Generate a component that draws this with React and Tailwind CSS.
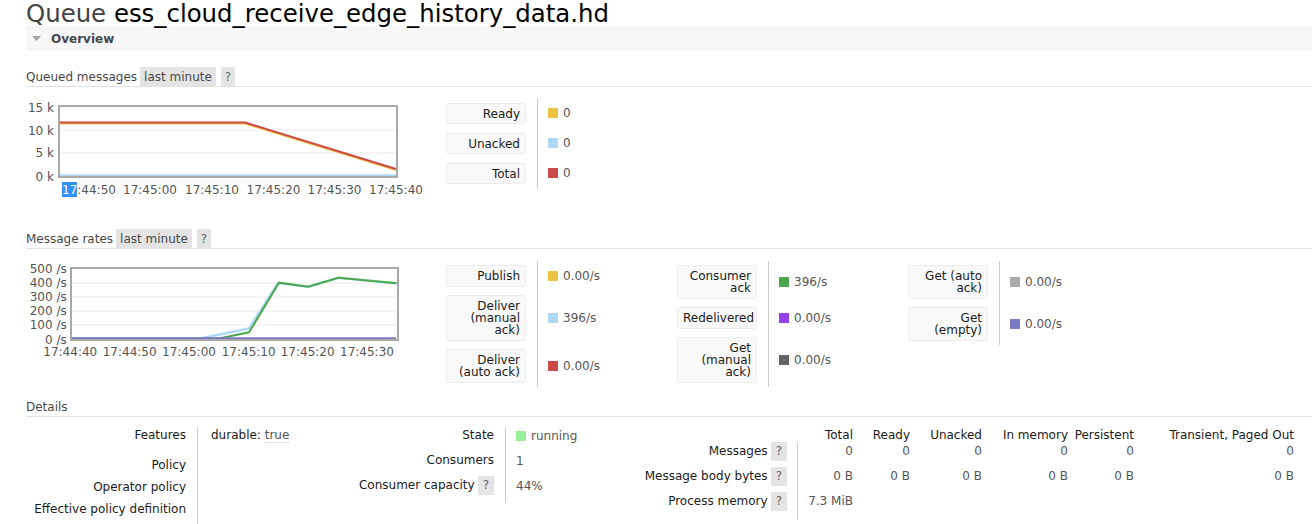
import * as React from 'react';

const QUEUED = [
  { label: ['Ready'], color: 'bg-[#edc240]', value: '0' },
  { label: ['Unacked'], color: 'bg-[#afd8f8]', value: '0' },
  { label: ['Total'], color: 'bg-[#cb4b4b]', value: '0' },
];

const RATES = [
  [
    { label: ['Publish'], color: 'bg-[#edc240]', value: '0.00/s' },
    { label: ['Deliver', '(manual', 'ack)'], color: 'bg-[#afd8f8]', value: '396/s' },
    { label: ['Deliver', '(auto ack)'], color: 'bg-[#cb4b4b]', value: '0.00/s' },
  ],
  [
    { label: ['Consumer', 'ack'], color: 'bg-[#4da74d]', value: '396/s' },
    { label: ['Redelivered'], color: 'bg-[#9440ed]', value: '0.00/s' },
    { label: ['Get', '(manual', 'ack)'], color: 'bg-[#646464]', value: '0.00/s' },
  ],
  [
    { label: ['Get (auto', 'ack)'], color: 'bg-[#aaaaaa]', value: '0.00/s' },
    { label: ['Get', '(empty)'], color: 'bg-[#7c79c3]', value: '0.00/s' },
  ],
];

const MSG_COLS = ['Total', 'Ready', 'Unacked', 'In memory', 'Persistent', 'Transient, Paged Out'];

function Help() {
  return (
    <span className="inline-flex h-[19px] items-center bg-[#e4e4e4] px-[5px] text-[#666]">?</span>
  );
}

function SectionHead({ title, options }) {
  return (
    <div className="flex h-[20px] items-center border-b border-[#e2e2e2] text-[#484848]">
      <span>{title}</span>
      {options && (
        <>
          <span className="ml-[3px] flex h-[19px] items-center bg-[#e4e4e4] px-[4px]">last minute</span>
          <span className="ml-[5px] flex h-[19px] items-center bg-[#e4e4e4] px-[4px] text-[#666]">?</span>
        </>
      )}
    </div>
  );
}

// compact: the queued-messages legend, where every row is a single 21px box
function Legend({ rows, compact }) {
  return (
    <div className="grid w-[231px] shrink-0 grid-cols-[91px_auto] content-start">
      {rows.map((r, i) => (
        <React.Fragment key={i}>
          <div className={compact ? 'pb-[4px] pr-[11px] pt-[5px]' : 'py-[4px] pr-[11px]'}>
            <div
              className={`rounded-[3px] border border-[#ececec] bg-[#f9f9f9] px-[5px] text-right text-[#1a1a1a] ${
                compact ? 'flex h-[21px] items-center justify-end' : 'py-[4px]'
              }`}
            >
              {r.label.map((l, j) => (
                <div key={j}>{l}</div>
              ))}
            </div>
          </div>
          <div className="flex items-center border-l border-[#ccc] pl-[10px] text-[#555]">
            <span className={`mr-[5px] h-[10px] w-[10px] ${r.color}`} />
            {r.value}
          </div>
        </React.Fragment>
      ))}
    </div>
  );
}

function QueuedChart() {
  const xs = [62, 123, 185, 246.5, 307.5, 369];
  const labels = ['17:44:50', '17:45:00', '17:45:10', '17:45:20', '17:45:30', '17:45:40'];
  return (
    <svg width="404" height="102" viewBox="26 98 404 102" className="shrink-0" fontFamily="DejaVu Sans, sans-serif" fontSize="12">
      <line x1="60" x2="396" y1="130" y2="130" stroke="#ebebeb" />
      <line x1="60" x2="396" y1="153" y2="153" stroke="#ebebeb" />
      <line x1="60" x2="396" y1="175.5" y2="175.5" stroke="#afd8f8" strokeWidth="2.5" />
      <polyline points="60,123.5 245,123.5 396,170" fill="none" stroke="#edc240" strokeWidth="2" />
      <polyline points="60,122.5 245,122.5 396,169" fill="none" stroke="#cb4b4b" strokeWidth="2" />
      <rect x="59" y="106" width="338" height="71" fill="none" stroke="#a9a9a9" strokeWidth="2" />
      {[['15 k', 108], ['10 k', 130.5], ['5 k', 153], ['0 k', 176.5]].map(([t, y]) => (
        <text key={t} x="54" y={y + 4.4} textAnchor="end" fill="#545454">{t}</text>
      ))}
      <rect x="62" y="182" width="15" height="15" fill="#3390ff" />
      {labels.map((t, i) =>
        i === 0 ? (
          <text key={t} x={xs[i]} y="194" fill="#545454">
            <tspan fill="#fff">17</tspan>:44:50
          </text>
        ) : (
          <text key={t} x={xs[i]} y="194" fill="#545454">{t}</text>
        )
      )}
    </svg>
  );
}

function RatesChart() {
  const xs = [43.3, 102.7, 162, 221.7, 280.7, 340];
  const labels = ['17:44:40', '17:44:50', '17:45:00', '17:45:10', '17:45:20', '17:45:30'];
  return (
    <svg width="404" height="104" viewBox="26 261 404 104" className="shrink-0" fontFamily="DejaVu Sans, sans-serif" fontSize="12">
      {[283, 297, 311, 325].map((y) => (
        <line key={y} x1="72" x2="396" y1={y} y2={y} stroke="#ebebeb" />
      ))}
      <polyline points="200,338.5 249,328.5 278,283 308.3,286.7 338.3,277.7 396.5,283.3" fill="none" stroke="#afd8f8" strokeWidth="2.5" />
      <polyline points="72,338.5 220,338.3 249,332.3 279,282.7 308.3,286.7 338.3,277.7 396.5,283.3" fill="none" stroke="#4da74d" strokeWidth="2" />
      <line x1="72" x2="396" y1="338.5" y2="338.5" stroke="#7c79c3" strokeWidth="2.5" />
      <rect x="71" y="268" width="327" height="72" fill="none" stroke="#a9a9a9" strokeWidth="2" />
      {[['500 /s', 268.7], ['400 /s', 283], ['300 /s', 297], ['200 /s', 311], ['100 /s', 325], ['0 /s', 339.3]].map(([t, y]) => (
        <text key={t} x="66.7" y={y + 4.4} textAnchor="end" fill="#545454">{t}</text>
      ))}
      {labels.map((t, i) => (
        <text key={t} x={xs[i]} y="355.7" fill="#545454">{t}</text>
      ))}
    </svg>
  );
}

export default function App() {
  return (
    <div className="h-[524px] w-[1312px] overflow-hidden bg-white pl-[26px] font-['DejaVu_Sans',Verdana,sans-serif] text-[12px] leading-[12px] text-[#484848]">
      <h1 className="h-[26px] whitespace-nowrap text-[24.4px] font-normal leading-[28.5px] text-[#444]">
        Queue <span className="text-black">ess_cloud_receive_edge_history_data.hd</span>
      </h1>

      <div className="flex h-[25px] items-center bg-[#f7f7f7] pl-[6px]">
        <svg width="9" height="5" viewBox="0 0 9 5" className="mr-[10px]">
          <polygon points="0,0 9,0 4.5,5" fill="#a6a6a6" />
        </svg>
        <span className="font-bold text-[#484848]">Overview</span>
      </div>

      <div className="mt-[16px]">
        <SectionHead title="Queued messages" options />
      </div>
      <div className="flex h-[142px] items-start pt-[11px]">
        <QueuedChart />
        <div className="ml-[16px]">
          <Legend rows={QUEUED} compact />
        </div>
      </div>

      <SectionHead title="Message rates" options />
      <div className="flex h-[148px] items-start pt-[12px]">
        <RatesChart />
        <div className="ml-[16px] flex">
          {RATES.map((col, i) => (
            <Legend key={i} rows={col} />
          ))}
        </div>
      </div>

      <SectionHead title="Details" />
      <div className="flex items-start pt-[11px]">
        {/* features / policy */}
        <div className="grid w-[314px] shrink-0 grid-cols-[171px_143px] text-[#1a1a1a]">
          <div className="h-[26px] pr-[11px] pt-[1px] text-right">Features</div>
          <div className="border-l border-[#ccc] pl-[13px] pt-[1px]">
            durable:{' '}
            <abbr className="border-b border-dotted border-[#ccc] text-[#555] no-underline">true</abbr>
          </div>
          <div className="h-[22px] pr-[11px] pt-[5px] text-right">Policy</div>
          <div className="border-l border-[#ccc]" />
          <div className="h-[22px] pr-[11px] pt-[5px] text-right">Operator policy</div>
          <div className="border-l border-[#ccc]" />
          <div className="h-[26px] pr-[11px] pt-[5px] text-right">Effective policy definition</div>
          <div className="border-l border-[#ccc]" />
        </div>

        {/* state / consumers */}
        <div className="grid w-[300px] shrink-0 grid-cols-[165px_auto] text-[#1a1a1a]">
          <div className="h-[25px] pr-[11px] pt-[1px] text-right">State</div>
          <div className="flex items-start border-l border-[#ccc] pl-[10px] pt-[2px] text-[#555]">
            <span className="mr-[5px] mt-[1px] h-[10px] w-[10px] bg-[#99ee99]" />
            running
          </div>
          <div className="h-[25px] pr-[11px] pt-[1px] text-right">Consumers</div>
          <div className="border-l border-[#ccc] pl-[10px] pt-[2px] text-[#555]">1</div>
          <div className="h-[25px] pr-[11px] pt-[1px]">
            <div className="flex h-[12px] items-center justify-end gap-[3px]">
              Consumer capacity <Help />
            </div>
          </div>
          <div className="border-l border-[#ccc] pl-[10px] pt-[2px] text-[#555]">44%</div>
        </div>

        {/* message counts */}
        <div className="grid shrink-0 grid-cols-[157px_56px_57px_72px_86px_66px_160px] text-[#1a1a1a]">
          <div className="h-[15px]" />
          {MSG_COLS.map((c) => (
            <div key={c} className="h-[15px] whitespace-nowrap pt-[1px] text-right">{c}</div>
          ))}

          {[
            ['Messages', ['0', '0', '0', '0', '0', '0'], 'h-[25px]'],
            ['Message body bytes', ['0 B', '0 B', '0 B', '0 B', '0 B', '0 B'], 'h-[25px]'],
            ['Process memory', ['7.3 MiB', '', '', '', '', ''], 'h-[27px]'],
          ].map(([label, vals, h]) => (
            <React.Fragment key={label}>
              <div className={`${h} pr-[10px] pt-[2px]`}>
                <div className="flex h-[12px] items-center justify-end gap-[3px] whitespace-nowrap">
                  {label} <Help />
                </div>
              </div>
              {vals.map((v, i) => (
                <div
                  key={i}
                  className={`whitespace-nowrap pt-[2px] text-right text-[#555] ${i === 0 ? 'border-l border-[#ccc]' : ''}`}
                >
                  {v}
                </div>
              ))}
            </React.Fragment>
          ))}
        </div>
      </div>
    </div>
  );
}
